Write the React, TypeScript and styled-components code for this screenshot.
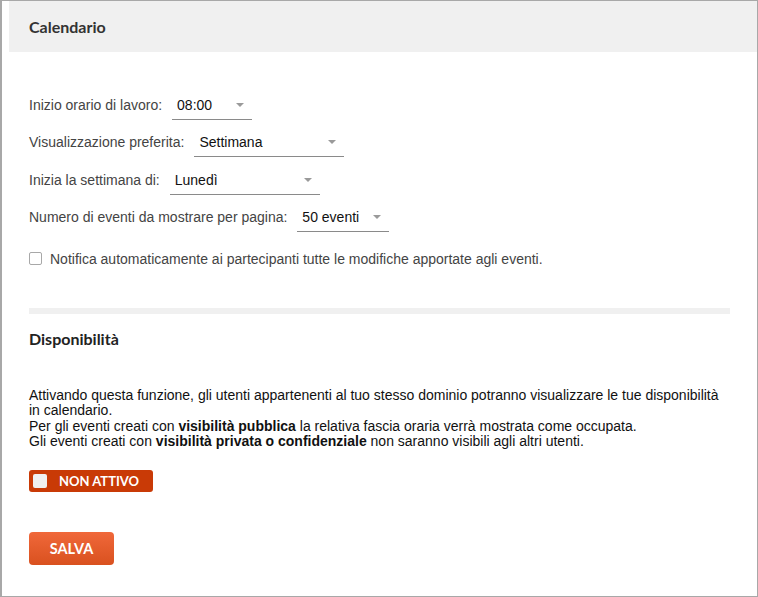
import styled, { createGlobalStyle } from "styled-components";

const GlobalStyle = createGlobalStyle`
  html, body {
    margin: 0;
    padding: 0;
    background: #fff;
  }
  * {
    box-sizing: border-box;
  }
`;

const Frame = styled.div`
  width: 758px;
  height: 597px;
  border: 1px solid #a8a8a8;
  border-left-width: 2px;
  padding-left: 7px;
  background: #fff;
  font-family: "Liberation Sans", Arial, sans-serif;
  font-size: 14px;
  color: #444;
`;

const Header = styled.div`
  height: 51px;
  background: #f0f0f0;
  display: flex;
  align-items: center;
  padding-left: 20px;
`;

const Title = styled.h2`
  margin: 0;
  font-family: Lato, "Open Sans", sans-serif;
  font-weight: 700;
  font-size: 16px;
  color: #333;
`;

const Body = styled.div`
  padding: 42px 27px 0 20px;
`;

const Row = styled.div`
  display: flex;
  align-items: flex-start;
  gap: 10px;
  height: 26px;
  margin-bottom: 11.3px;
`;

const Label = styled.span`
  line-height: 22px;
  color: #444;
`;

const Select = styled.div<{ $width: number }>`
  position: relative;
  width: ${(p) => p.$width}px;
  line-height: 22px;
  padding: 0 0 3px 5px;
  border-bottom: 1px solid #8a8a8a;
  color: #111;

  &::after {
    content: "";
    position: absolute;
    right: 8px;
    top: 9px;
    border-left: 4px solid transparent;
    border-right: 4px solid transparent;
    border-top: 4px solid #9a9a9a;
  }
`;

const CheckRow = styled.label`
  display: flex;
  align-items: center;
  gap: 8px;
  margin-top: 19px;
  line-height: 16px;
  color: #444;
`;

const Box = styled.span`
  width: 13px;
  height: 13px;
  border: 1px solid #a8a8a8;
  border-radius: 2px;
  background: #fff;
`;

const Divider = styled.div`
  height: 6px;
  background: #f0f0f0;
  margin-top: 41px;
`;

const SectionTitle = styled.h3`
  margin: 15px 0 0;
  font-family: Lato, "Open Sans", sans-serif;
  font-weight: 700;
  font-size: 16px;
  line-height: 20px;
  color: #222;
`;

const Text = styled.p`
  margin: 39px 0 0;
  font-size: 14px;
  line-height: 15.5px;
  color: #111;

  b {
    font-weight: 700;
  }
`;

const Toggle = styled.div`
  display: inline-flex;
  align-items: center;
  gap: 12px;
  width: 124px;
  height: 22px;
  margin-top: 20px;
  padding-left: 4px;
  border-radius: 3px;
  background: #c93a06;
  font-family: Lato, "Open Sans", sans-serif;
  font-weight: 700;
  font-size: 13px;
  color: #fff;
`;

const Knob = styled.span`
  width: 14px;
  height: 14px;
  border-radius: 2px;
  background: #f0f0f0;
`;

const SaveButton = styled.button`
  display: block;
  width: 85px;
  height: 33px;
  margin-top: 40px;
  border: 0;
  border-radius: 4px;
  background: linear-gradient(#f0683a, #d9511f);
  font-family: Lato, "Open Sans", sans-serif;
  font-weight: 700;
  font-size: 14.5px;
  color: #fff;
  cursor: pointer;
`;

const settings = [
  { label: "Inizio orario di lavoro:", value: "08:00", width: 80 },
  { label: "Visualizzazione preferita:", value: "Settimana", width: 150 },
  { label: "Inizia la settimana di:", value: "Lunedì", width: 150 },
  { label: "Numero di eventi da mostrare per pagina:", value: "50 eventi", width: 92 },
];

export default function App() {
  return (
    <>
      <GlobalStyle />
      <Frame>
        <Header>
          <Title>Calendario</Title>
        </Header>
        <Body>
          {settings.map((s) => (
            <Row key={s.label}>
              <Label>{s.label}</Label>
              <Select $width={s.width}>{s.value}</Select>
            </Row>
          ))}
          <CheckRow>
            <Box />
            Notifica automaticamente ai partecipanti tutte le modifiche apportate agli eventi.
          </CheckRow>
          <Divider />
          <SectionTitle>Disponibilità</SectionTitle>
          <Text>
            Attivando questa funzione, gli utenti appartenenti al tuo stesso dominio potranno visualizzare le tue
            disponibilità in calendario.
            <br />
            Per gli eventi creati con <b>visibilità pubblica</b> la relativa fascia oraria verrà mostrata come occupata.
            <br />
            Gli eventi creati con <b>visibilità privata o confidenziale</b> non saranno visibili agli altri utenti.
          </Text>
          <Toggle>
            <Knob />
            NON ATTIVO
          </Toggle>
          <SaveButton>SALVA</SaveButton>
        </Body>
      </Frame>
    </>
  );
}
